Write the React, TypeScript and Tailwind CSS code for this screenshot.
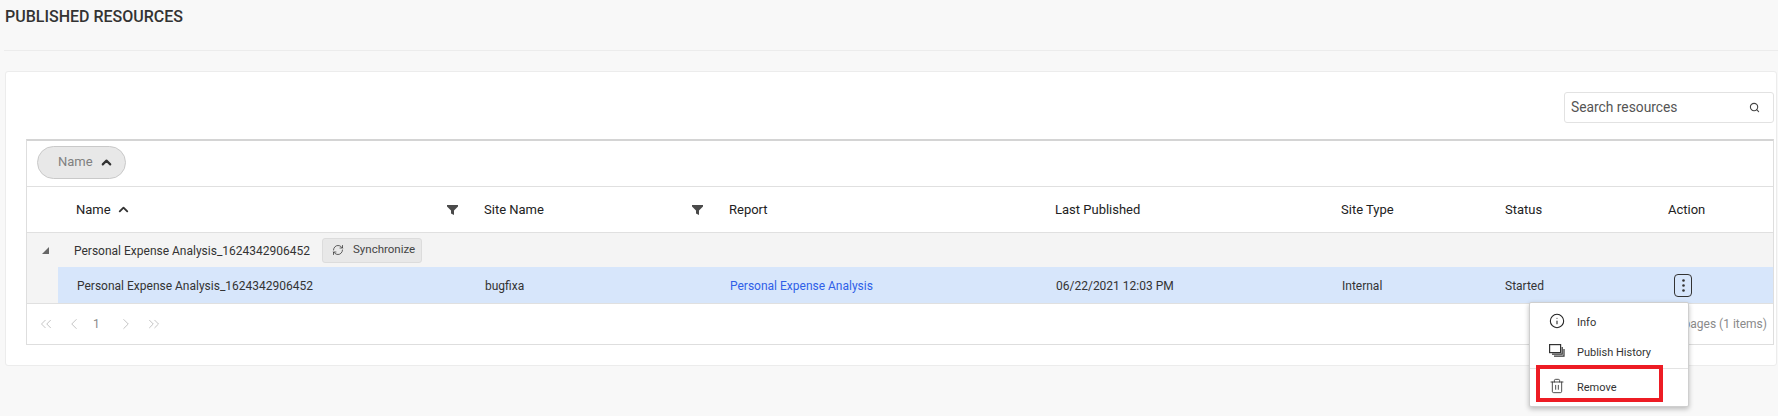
import { ChevronLeft, ChevronRight, ChevronsLeft, ChevronsRight, ChevronUp, Info, RefreshCw, Search, Trash2 } from "lucide-react";

const columns = [
  { label: "Site Name", width: "w-[245px]" },
  { label: "Report", width: "w-[326px]" },
  { label: "Last Published", width: "w-[286px]" },
  { label: "Site Type", width: "w-[164px]" },
  { label: "Status", width: "w-[163px]" },
  { label: "Action", width: "flex-1" },
];

function FilterIcon() {
  return (
    <svg width="11" height="10" viewBox="0 0 11 10" className="shrink-0">
      <path d="M0 0H11V1.5L7 5.5V10L4 8.5V5.5L0 1.5Z" fill="#4a4a4a" />
    </svg>
  );
}

function ActionMenu() {
  return (
    <div className="absolute left-[1529px] top-[302px] h-[105px] w-[160px] rounded-[2px] border border-[#cfcfcf] bg-white text-[11px] text-[#333] shadow-[0_2px_5px_rgba(0,0,0,0.25)]">
      <div className="flex h-[66px] flex-col justify-center gap-[15px] border-b border-[#e3e3e3] pl-[19px] pt-[4px]">
        <div className="flex items-center gap-[12px]">
          <Info size={16} strokeWidth={1.6} className="-mt-[3px] text-[#222]" />
          <span className="leading-[15px]">Info</span>
        </div>
        <div className="flex items-center gap-[12px]">
          <svg width="16" height="14" viewBox="0 0 16 14" className="-mt-[3px] shrink-0" fill="none" stroke="#333" strokeWidth="1.2">
            <rect x="0.6" y="0.6" width="11" height="8" fill="#fff" />
            <path d="M13.2 3V10.2H3" />
            <path d="M15 5V12.2H5" />
          </svg>
          <span className="leading-[15px]">Publish History</span>
        </div>
      </div>
      <div className="flex items-center gap-[12px] pl-[19px] pt-[11px]">
        <Trash2 size={16} strokeWidth={1.3} className="-mt-[4px] text-[#333]" />
        <span className="leading-[15px]">Remove</span>
      </div>
      <div className="absolute left-[6px] top-[62px] h-[37px] w-[127px] border-[4px] border-[#ed1c24]" />
    </div>
  );
}

export default function App() {
  return (
    <div className="relative h-[416px] w-[1778px] overflow-hidden bg-[#f8f8f8] font-['Roboto',sans-serif] text-[12px] text-[#333]">
      <div className="ml-[5px] flex h-[34px] items-center text-[16px] font-medium text-[#333]">PUBLISHED RESOURCES</div>
      <div className="ml-[4px] mt-[16px] h-px bg-[#ececec]" />

      <div className="ml-[5px] mr-[1px] mt-[20px] h-[295px] rounded-[3px] border border-[#ececec] bg-white pl-[20px] pr-[2px]">
        <div className="flex justify-end pt-[20px]">
          <div className="flex h-[31px] w-[210px] items-center justify-between rounded-[3px] border border-[#e2e2e2] pl-[6px] pr-[13px] text-[13.8px] text-[#555]">
            <span>Search resources</span>
            <Search size={11} strokeWidth={2.4} className="text-[#444]" />
          </div>
        </div>

        <div className="mt-[16px] h-[206px] border-x border-b border-t-2 border-[#dedede] border-t-[#d4d4d4]">
          <div className="flex h-[46px] items-center border-b border-[#e0e0e0] pb-[3px] pl-[10px]">
            <div className="flex h-[33px] w-[89px] items-center gap-[6px] rounded-[17px] border border-[#c9c9c9] bg-[#e8e8e8] pl-[20px] text-[13px] text-[#808080]">
              <span>Name</span>
              <ChevronUp size={15} strokeWidth={3.4} className="text-[#333]" />
            </div>
          </div>

          <div className="flex h-[46px] items-center border-b border-[#e0e0e0] text-[13px] font-normal text-[#222]">
            <div className="w-[31px]" />
            <div className="flex w-[408px] items-center justify-between pl-[18px] pr-[8px]">
              <div className="flex items-center gap-[5px]">
                <span>Name</span>
                <ChevronUp size={15} strokeWidth={3} className="text-[#333]" />
              </div>
              <FilterIcon />
            </div>
            {columns.map((col, i) => (
              <div key={col.label} className={`${col.width} flex items-center justify-between pl-[18px] pr-[8px]`}>
                <span>{col.label}</span>
                {i === 0 && <FilterIcon />}
              </div>
            ))}
          </div>

          <div className="flex h-[34px] items-center bg-[#f4f4f4]">
            <div className="flex w-[47px] justify-center pr-[10px]">
              <svg width="7" height="7" viewBox="0 0 7 7"><path d="M7 0V7H0Z" fill="#666" /></svg>
            </div>
            <span className="pt-[1px] text-[#333]">Personal Expense Analysis_1624342906452</span>
            <div className="ml-[12px] flex h-[25px] w-[100px] items-center gap-[9px] rounded-[3px] border border-[#dcdcdc] bg-[#e8e8e8] pl-[9px] text-[11.5px] text-[#444]">
              <RefreshCw size={12} strokeWidth={1.5} className="text-[#333]" />
              <span>Synchronize</span>
            </div>
          </div>

          <div className="flex h-[37px] border-b border-[#e0e0e0] bg-[#f4f4f4]">
            <div className="w-[31px]" />
            <div className="flex flex-1 items-center bg-[#d7e6fb] pt-[1px]">
              <div className="w-[408px] pl-[19px]">Personal Expense Analysis_1624342906452</div>
              <div className="w-[245px] pl-[19px]">bugfixa</div>
              <div className="w-[326px] pl-[19px] text-[#2f5fe8]">Personal Expense Analysis</div>
              <div className="w-[286px] pl-[19px]">06/22/2021 12:03 PM</div>
              <div className="w-[164px] pl-[19px]">Internal</div>
              <div className="w-[165px] pl-[18px]">Started</div>
              <div className="flex flex-1 pl-[22px]">
                <div className="flex h-[23px] w-[18px] items-center justify-center rounded-[4px] border border-[#333]">
                  <svg width="3" height="13" viewBox="0 0 3 13" fill="#333">
                    <circle cx="1.5" cy="1.5" r="1.3" />
                    <circle cx="1.5" cy="6.5" r="1.3" />
                    <circle cx="1.5" cy="11.5" r="1.3" />
                  </svg>
                </div>
              </div>
            </div>
          </div>

          <div className="flex h-[40px] items-center justify-between pl-[10px] pr-[6px] text-[#8a8a8a]">
            <div className="flex items-center text-[#bdbdbd]">
              <ChevronsLeft size={18} strokeWidth={1.2} />
              <ChevronLeft size={18} strokeWidth={1.2} className="ml-[10px]" />
              <span className="ml-[10px] text-[12px] text-[#8a8a8a]">1</span>
              <ChevronRight size={18} strokeWidth={1.2} className="ml-[17px]" />
              <ChevronsRight size={18} strokeWidth={1.2} className="ml-[10px]" />
            </div>
            <span>1 of 1 pages (1 items)</span>
          </div>
        </div>
      </div>

      <ActionMenu />
    </div>
  );
}
